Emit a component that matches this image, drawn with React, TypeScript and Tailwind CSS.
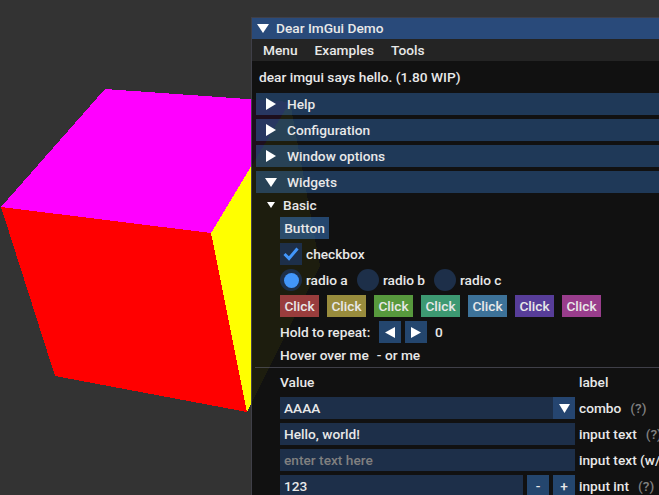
import React from "react";

function Tri({ dir, size, h, className = "" }: { dir: "right" | "down" | "left"; size: number; h: number; className?: string }) {
  const pts =
    dir === "right"
      ? `0,0 ${size},${h / 2} 0,${h}`
      : dir === "left"
      ? `${size},0 0,${h / 2} ${size},${h}`
      : `0,0 ${size},0 ${size / 2},${h}`;
  return (
    <svg width={size} height={h} viewBox={`0 0 ${size} ${h}`} className={`shrink-0 ${className}`}>
      <polygon points={pts} fill="#fff" />
    </svg>
  );
}

function Header({ label, open }: { label: string; open?: boolean }) {
  return (
    <div className="flex h-[22px] items-center bg-[rgba(66,150,250,0.31)]">
      {open ? (
        <Tri dir="down" size={12} h={9} className="ml-[9px] mr-[10px]" />
      ) : (
        <Tri dir="right" size={10} h={12} className="ml-[10px] mr-[11px]" />
      )}
      <span>{label}</span>
    </div>
  );
}

function Radio({ label, on }: { label: string; on?: boolean }) {
  return (
    <div className="flex w-[77px] items-center gap-1">
      <div className="flex h-[22px] w-[22px] items-center justify-center rounded-full bg-[#1d2f49]">
        {on && <div className="h-[15px] w-[15px] rounded-full bg-[#4296fa]" />}
      </div>
      <span>{label}</span>
    </div>
  );
}

const clicks = ["#993d3d", "#998c3d", "#57993d", "#3d9972", "#3d7299", "#573d99", "#993d8c"];

function Q() {
  return <span className="text-[#808080]">(?)</span>;
}

export default function App() {
  return (
    <div className="relative h-[495px] w-[659px] overflow-hidden bg-[#333333] font-['Roboto',sans-serif] text-[13.7px] font-medium leading-4 text-[#e8e8e8]">
      <svg width="659" height="495" className="absolute left-0 top-0" shapeRendering="crispEdges">
        <polygon points="1,207 105,89 290,102 211,233" fill="#ff00ff" />
        <polygon points="211,233 290,102 320,266 247,412" fill="#ffff00" />
        <polygon points="1,207 211,233 247,412 55,376" fill="#ff0000" />
      </svg>

      <div className="absolute left-[251px] top-[17px] h-[520px] w-[420px] overflow-hidden border border-[rgba(110,110,128,0.5)] bg-[rgba(15,15,15,0.94)]">
        <div className="flex h-[21px] items-center bg-[#294a7a] pb-px">
          <Tri dir="down" size={12} h={9} className="ml-[5px] mr-[7px]" />
          <span>Dear ImGui Demo</span>
        </div>
        <div className="flex h-[22px] items-center gap-[17px] bg-[#242424] pl-[11px]">
          <span>Menu</span>
          <span>Examples</span>
          <span>Tools</span>
        </div>

        <div className="flex flex-col gap-1 pl-1 pt-2">
          <div className="mb-1 pl-[3px]">dear imgui says hello. (1.80 WIP)</div>
          <Header label="Help" />
          <Header label="Configuration" />
          <Header label="Window options" />
          <Header label="Widgets" open />

          <div className="flex h-4 items-center pl-[11px]">
            <Tri dir="down" size={8} h={6} className="mr-2" />
            <span>Basic</span>
          </div>

          <div className="flex flex-col items-start gap-1 pl-6">
            <div className="flex h-[22px] w-[49px] items-center justify-center bg-[rgba(66,150,250,0.4)]">Button</div>
            <div className="flex items-center gap-1">
              <div className="flex h-[22px] w-[22px] items-center justify-center bg-[#1d2f49]">
                <svg width="16" height="14" viewBox="0 0 16 14">
                  <polyline points="1.5,7 6,11.5 14.5,1.5" fill="none" stroke="#4296fa" strokeWidth="3" />
                </svg>
              </div>
              <span>checkbox</span>
            </div>
            <div className="flex items-center">
              <Radio label="radio a" on />
              <Radio label="radio b" />
              <Radio label="radio c" />
            </div>
            <div className="flex gap-2">
              {clicks.map((c, i) => (
                <div key={i} className="flex h-[22px] w-[39px] items-center justify-center" style={{ backgroundColor: c }}>
                  Click
                </div>
              ))}
            </div>
            <div className="flex items-center">
              <span className="w-[99px]">Hold to repeat:</span>
              <div className="flex h-[22px] w-[22px] items-center justify-center bg-[rgba(66,150,250,0.4)]">
                <Tri dir="left" size={10} h={11} />
              </div>
              <div className="ml-1 flex h-[22px] w-[22px] items-center justify-center bg-[rgba(66,150,250,0.4)]">
                <Tri dir="right" size={10} h={11} />
              </div>
              <span className="ml-2">0</span>
            </div>
            <div className="flex gap-2 whitespace-nowrap">
              <span>Hover over me</span>
              <span>- or me</span>
            </div>
          </div>

          <div className="-ml-px h-px bg-[rgba(110,110,128,0.5)]" />

          <div className="mt-[2px] flex flex-col gap-1 pl-6">
            <div className="mb-[3px] flex">
              <span className="w-[299px]">Value</span>
              <span>label</span>
            </div>
            <div className="flex items-center gap-1 whitespace-nowrap">
              <div className="flex h-[22px] w-[295px] shrink-0 items-center justify-between bg-[#1d2f49] pl-1">
                <span>AAAA</span>
                <div className="flex h-[22px] w-[22px] items-center justify-center bg-[#254570]">
                  <Tri dir="down" size={11} h={9} />
                </div>
              </div>
              <span>combo</span>
              <span className="ml-[5px]"><Q /></span>
            </div>
            <div className="flex items-center gap-1 whitespace-nowrap">
              <div className="flex h-[22px] w-[295px] shrink-0 items-center bg-[#1d2f49] pl-1">Hello, world!</div>
              <span>input text</span>
              <span className="ml-[5px]"><Q /></span>
            </div>
            <div className="flex items-center gap-1 whitespace-nowrap">
              <div className="flex h-[22px] w-[295px] shrink-0 items-center bg-[#1d2f49] pl-1 text-[#808080]">enter text here</div>
              <span>input text (w/ hint)</span>
            </div>
            <div className="flex items-center gap-1 whitespace-nowrap">
              <div className="flex h-[22px] w-[243px] shrink-0 items-center bg-[#1d2f49] pl-1">123</div>
              <div className="flex h-[22px] w-[22px] shrink-0 items-center justify-center bg-[rgba(66,150,250,0.4)]">-</div>
              <div className="flex h-[22px] w-[22px] shrink-0 items-center justify-center bg-[rgba(66,150,250,0.4)]">+</div>
              <span>input int</span>
              <span className="ml-[5px]"><Q /></span>
            </div>
          </div>
        </div>
      </div>
    </div>
  );
}
